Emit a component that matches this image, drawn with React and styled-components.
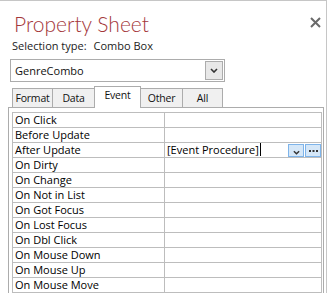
import React from "react";
import styled, { createGlobalStyle } from "styled-components";

const Global = createGlobalStyle`
  html, body { margin: 0; padding: 0; background: #ffffff; }
  body { font-family: "Open Sans", "Noto Sans", sans-serif; }
  * { box-sizing: border-box; }
`;

const Window = styled.div`
  width: 327px;
  height: 293px;
  overflow: hidden;
  border-top: 1px solid #c6c6c6;
  border-right: 1px solid #c6c6c6;
  background: #fff;
  display: flex;
  flex-direction: column;
`;

const Header = styled.div`
  display: flex;
  justify-content: space-between;
  align-items: flex-start;
  padding: 11px 5px 0 14px;
`;

const Title = styled.div`
  font-family: "Lato", "Open Sans", sans-serif;
  font-weight: 300;
  font-size: 21px;
  line-height: 24px;
  height: 24px;
  color: #a4373a;
  white-space: nowrap;
`;

const Close = styled.button`
  border: none;
  background: transparent;
  padding: 0;
  margin-top: 4px;
  width: 12px;
  height: 12px;
  display: flex;
  align-items: center;
  justify-content: center;
`;

const SelectionLine = styled.div`
  display: flex;
  gap: 7px;
  margin-top: 3px;
  padding-left: 12px;
  font-size: 11px;
  line-height: 14px;
  height: 14px;
  color: #222;
`;

const Combo = styled.div`
  margin-top: 6px;
  margin-left: 10px;
  width: 215px;
  height: 23px;
  flex: none;
  border: 1px solid #acacac;
  display: flex;
  align-items: center;
  justify-content: space-between;
  padding: 1px 1px 1px 4px;
  font-size: 11px;
  line-height: 15px;
  color: #111;
`;

const DropButton = styled.div`
  width: 18px;
  height: 19px;
  background: #e8e8e8;
  border: 1px solid #acacac;
  display: flex;
  align-items: center;
  justify-content: center;
`;

const TabRow = styled.div`
  display: flex;
  align-items: flex-end;
  margin-left: 12px;
  height: 25px;
  flex: none;
  position: relative;
  z-index: 1;
`;

const Tab = styled.div`
  width: ${(p) => p.$w}px;
  height: ${(p) => (p.$active ? 22 : 19)}px;
  margin-left: -1px;
  &:first-child { margin-left: 0; }
  margin-bottom: ${(p) => (p.$active ? -1 : 0)}px;
  border: 1px solid #acacac;
  border-bottom: none;
  background: ${(p) => (p.$active ? "#ffffff" : "#f0f0f0")};
  font-size: 10.5px;
  letter-spacing: -0.2px;
  line-height: ${(p) => (p.$active ? 17 : 18)}px;
  text-align: center;
  color: #111;
  white-space: nowrap;
  overflow: hidden;
  position: relative;
  z-index: ${(p) => (p.$active ? 2 : 1)};
`;

const Panel = styled.div`
  margin-left: 8px;
  width: 316px;
  flex: 1;
  border: 1px solid #acacac;
  border-bottom: none;
  padding: 4px 1px 0 3px;
`;

const Grid = styled.div`
  width: 310px;
  border: 1px solid #bdbdbd;
  border-bottom: none;
  display: grid;
  grid-template-columns: 152px 1fr;
`;

const Label = styled.div`
  height: 15px;
  border-right: 1px solid #bdbdbd;
  border-bottom: 1px solid #bdbdbd;
  padding-left: 2px;
  font-size: 11px;
  line-height: 14px;
  color: #000;
  white-space: nowrap;
`;

const Value = styled.div`
  height: 15px;
  border-bottom: 1px solid #bdbdbd;
  padding-left: 2px;
  font-size: 11px;
  line-height: 14px;
  color: #000;
  display: flex;
  align-items: flex-start;
  white-space: nowrap;
`;

const Caret = styled.span`
  display: inline-block;
  width: 1px;
  height: 13px;
  background: #000;
  margin-left: 1px;
`;

const CellButtons = styled.div`
  margin-left: auto;
  display: flex;
  gap: 1px;
  padding-top: 1px;
`;

const MiniButton = styled.div`
  width: 16px;
  height: 13px;
  background: #d5e7f8;
  border: 1px solid #7eb4ea;
  display: flex;
  align-items: ${(p) => (p.$bottom ? "flex-end" : "center")};
  justify-content: center;
  padding-bottom: ${(p) => (p.$bottom ? 1 : 0)}px;
`;

const Chevron = ({ w = 8, h = 5 }) => (
  <svg width={w} height={h} viewBox="0 0 8 5">
    <path d="M1 1 L4 4 L7 1" fill="none" stroke="#333" strokeWidth="1.6" />
  </svg>
);

const Dots = () => (
  <svg width="9" height="3" viewBox="0 0 9 3">
    <rect x="0" y="1" width="2" height="2" fill="#333" />
    <rect x="3.5" y="1" width="2" height="2" fill="#333" />
    <rect x="7" y="1" width="2" height="2" fill="#333" />
  </svg>
);

const rows = [
  "On Click",
  "Before Update",
  "After Update",
  "On Dirty",
  "On Change",
  "On Not in List",
  "On Got Focus",
  "On Lost Focus",
  "On Dbl Click",
  "On Mouse Down",
  "On Mouse Up",
  "On Mouse Move",
];

const tabs = [
  { name: "Format", w: 41 },
  { name: "Data", w: 43 },
  { name: "Event", w: 47, active: true },
  { name: "Other", w: 43 },
  { name: "All", w: 41 },
];

export default function App() {
  return (
    <>
      <Global />
      <Window>
        <Header>
          <Title>Property Sheet</Title>
          <Close aria-label="Close">
            <svg width="11" height="11" viewBox="0 0 11 11">
              <path d="M1 1 L10 10 M10 1 L1 10" stroke="#6a6a6a" strokeWidth="2" />
            </svg>
          </Close>
        </Header>
        <SelectionLine>
          <span>Selection type:</span>
          <span>Combo Box</span>
        </SelectionLine>
        <Combo>
          <span>GenreCombo</span>
          <DropButton>
            <Chevron />
          </DropButton>
        </Combo>
        <TabRow>
          {tabs.map((t) => (
            <Tab key={t.name} $w={t.w} $active={t.active}>
              {t.name}
            </Tab>
          ))}
        </TabRow>
        <Panel>
          <Grid>
            {rows.map((r) => (
              <React.Fragment key={r}>
                <Label>{r}</Label>
                {r === "After Update" ? (
                  <Value>
                    <span>[Event Procedure]</span>
                    <Caret />
                    <CellButtons>
                      <MiniButton $bottom>
                        <Chevron w={7} h={5} />
                      </MiniButton>
                      <MiniButton>
                        <Dots />
                      </MiniButton>
                    </CellButtons>
                  </Value>
                ) : (
                  <Value />
                )}
              </React.Fragment>
            ))}
          </Grid>
        </Panel>
      </Window>
    </>
  );
}
